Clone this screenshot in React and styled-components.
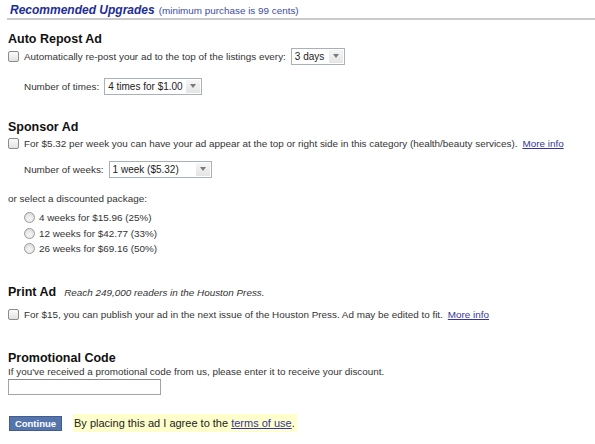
import React from "react";
import styled, { createGlobalStyle } from "styled-components";

const Global = createGlobalStyle`
  html, body { margin: 0; padding: 0; background: #fff; }
  body { font-family: "Liberation Sans", Arial, sans-serif; color: #333; }
`;

const Page = styled.div`
  width: 595px;
  height: 444px;
  padding-left: 8px;
  box-sizing: border-box;
  overflow: hidden;
`;

const Header = styled.div`
  margin-left: -1px;
  padding: 2px 0 0 3px;
  line-height: 14px;
  border-bottom: 2px solid #cacaca;
  white-space: nowrap;
`;

const HeaderTitle = styled.span`
  font-size: 12px;
  font-weight: bold;
  font-style: italic;
  color: #1d2e96;
`;

const HeaderNote = styled.span`
  font-size: 9.9px;
  color: #3d4c9e;
  margin-left: 4px;
`;

const Heading = styled.div`
  margin-top: ${(p) => p.$mt}px;
  font-size: 12.5px;
  line-height: 15px;
  font-weight: bold;
  color: #111;
  white-space: nowrap;
`;

const HeadingNote = styled.span`
  font-size: 9.9px;
  font-weight: normal;
  font-style: italic;
  color: #333;
  margin-left: 8px;
`;

const Row = styled.div`
  display: flex;
  align-items: center;
  height: ${(p) => p.$h || 16}px;
  margin-top: ${(p) => p.$mt || 0}px;
  padding-left: ${(p) => p.$indent || 0}px;
  font-size: 9.9px;
  white-space: nowrap;
`;

const RadioGroup = styled.div`
  margin-top: 4px;
  & > div {
    height: 15.5px;
  }
`;

const Check = styled.span`
  width: 11px;
  height: 11px;
  box-sizing: border-box;
  border: 1px solid #8c8c8c;
  border-radius: 2px;
  background: linear-gradient(#fbfbfb, #e2e2e2);
  margin-right: 5px;
  flex: none;
`;

const Radio = styled.span`
  width: 11px;
  height: 11px;
  box-sizing: border-box;
  border: 1px solid #9a9a9a;
  border-radius: 50%;
  background: radial-gradient(circle at 50% 65%, #f2f2f2 20%, #d4d4d4 100%);
  margin-right: 4px;
  flex: none;
`;

const Label = styled.span`
  margin-right: 5px;
`;

const Select = styled.span`
  display: flex;
  align-items: stretch;
  width: ${(p) => p.$w}px;
  height: 17px;
  box-sizing: border-box;
  border: 1px solid #a8b0bb;
  background: #fff;
  font-size: 10px;
  color: #222;
`;

const SelectValue = styled.span`
  flex: 1;
  display: flex;
  align-items: center;
  padding-left: 3px;
`;

const SelectArrow = styled.span`
  width: 14px;
  margin: 1px;
  background: linear-gradient(#f6f6f6, #e4e4e4);
  display: flex;
  align-items: center;
  justify-content: center;
  &::after {
    content: "";
    border-left: 3px solid transparent;
    border-right: 3px solid transparent;
    border-top: 4px solid #7a7a7a;
  }
`;

const Link = styled.a`
  color: #35359c;
  text-decoration: underline;
  margin-left: 5px;
  cursor: pointer;
`;

const Text = styled.div`
  margin-top: ${(p) => p.$mt || 0}px;
  font-size: 9.9px;
  line-height: ${(p) => p.$lh || 14}px;
  white-space: nowrap;
`;

const Input = styled.input`
  display: block;
  margin-top: 1px;
  width: 153px;
  height: 16px;
  box-sizing: border-box;
  border: 1px solid #a3a3a3;
  border-top-color: #8c8c8c;
  padding: 0;
`;

const Actions = styled.div`
  display: flex;
  align-items: center;
  margin-top: 19px;
  height: 18px;
  padding-left: 1px;
`;

const Button = styled.button`
  width: 53px;
  height: 15px;
  padding: 0;
  border: 1px solid #3f5d93;
  background: #5574ab;
  color: #fff;
  font-family: "Liberation Sans", Arial, sans-serif;
  font-size: 9.5px;
  font-weight: bold;
  line-height: 13px;
`;

const Agree = styled.span`
  margin-left: 11px;
  height: 18px;
  display: flex;
  align-items: center;
  padding: 0 2px 0 1px;
  background: #ffffcc;
  font-size: 11px;
  color: #222;
  white-space: nowrap;
`;

const TermsLink = styled.a`
  color: #35359c;
  text-decoration: underline;
`;

function Dropdown({ value, width }) {
  return (
    <Select $w={width}>
      <SelectValue>{value}</SelectValue>
      <SelectArrow />
    </Select>
  );
}

const packages = [
  "4 weeks for $15.96 (25%)",
  "12 weeks for $42.77 (33%)",
  "26 weeks for $69.16 (50%)",
];

export default function App() {
  return (
    <>
      <Global />
      <Page>
        <Header>
          <HeaderTitle>Recommended Upgrades</HeaderTitle>
          <HeaderNote>(minimum purchase is 99 cents)</HeaderNote>
        </Header>

        <Heading $mt={12}>Auto Repost Ad</Heading>
        <Row $h={18}>
          <Check />
          <Label>Automatically re-post your ad to the top of the listings every:</Label>
          <Dropdown value="3 days" width={54} />
        </Row>
        <Row $h={18} $mt={12} $indent={16}>
          <Label>Number of times:</Label>
          <Dropdown value="4 times for $1.00" width={98} />
        </Row>

        <Heading $mt={25}>Sponsor Ad</Heading>
        <Row>
          <Check />
          <span>
            For $5.32 per week you can have your ad appear at the top or right side in this category (health/beauty services).
          </span>
          <Link>More info</Link>
        </Row>
        <Row $h={18} $mt={9} $indent={16}>
          <Label>Number of weeks:</Label>
          <Dropdown value="1 week ($5.32)" width={103} />
        </Row>
        <Text $mt={14}>or select a discounted package:</Text>
        <RadioGroup>
          {packages.map((p) => (
            <Row key={p} $indent={16}>
              <Radio />
              <span>{p}</span>
            </Row>
          ))}
        </RadioGroup>

        <Heading $mt={28}>
          Print Ad<HeadingNote>Reach 249,000 readers in the Houston Press.</HeadingNote>
        </Heading>
        <Row $mt={6.5}>
          <Check />
          <span>
            For $15, you can publish your ad in the next issue of the Houston Press. Ad may be edited to fit.
          </span>
          <Link>More info</Link>
        </Row>

        <Heading $mt={29}>Promotional Code</Heading>
        <Text $lh={12}>If you've received a promotional code from us, please enter it to receive your discount.</Text>
        <Input type="text" />

        <Actions>
          <Button>Continue</Button>
          <Agree>
            By placing this ad I agree to the&nbsp;<TermsLink>terms of use</TermsLink>.
          </Agree>
        </Actions>
      </Page>
    </>
  );
}
